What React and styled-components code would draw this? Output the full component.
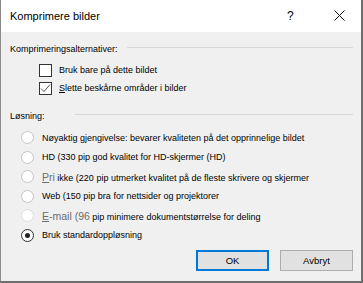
import styled, { createGlobalStyle } from "styled-components";

const Global = createGlobalStyle`
    html, body {
        margin: 0;
        padding: 0;
        background: #ffffff;
    }
    * {
        box-sizing: border-box;
    }
`

export default function App() {
    return (
        <Window>
            <Global />
            <TitleBar>
                <Title>Komprimere bilder</Title>
                <Help>?</Help>
                <Close>
                    <svg width="11" height="11" viewBox="0 0 11 11">
                        <path d="M0.5 0.5 L10.5 10.5 M10.5 0.5 L0.5 10.5" stroke="#111" strokeWidth="1" />
                    </svg>
                </Close>
            </TitleBar>

            <Body>
                <GroupHeader>
                    <span>Komprimeringsalternativer:</span>
                    <Rule gap={9} />
                </GroupHeader>
                <CheckList>
                    <CheckRow>
                        <CheckBox />
                        <span>Bruk bare på dette bildet</span>
                    </CheckRow>
                    <CheckRow>
                        <CheckBox>
                            <svg width="11" height="11" viewBox="0 0 11 11">
                                <path d="M1 5.5 L4 8.5 L10 1.5" fill="none" stroke="#555" strokeWidth="1" />
                            </svg>
                        </CheckBox>
                        <span><u>S</u>lette beskårne områder i bilder</span>
                    </CheckRow>
                </CheckList>

                <GroupHeader second>
                    <span>Løsning:</span>
                    <Rule gap={30} />
                </GroupHeader>
                <RadioList>
                    <RadioRow>
                        <Radio />
                        <span>Nøyaktig gjengivelse: bevarer kvaliteten på det opprinnelige bildet</span>
                    </RadioRow>
                    <RadioRow>
                        <Radio />
                        <span>HD (330 pip god kvalitet for HD-skjermer (HD)</span>
                    </RadioRow>
                    <RadioRow>
                        <Radio />
                        <span><Faded><u>P</u>ri</Faded> ikke (220 pip utmerket kvalitet på de fleste skrivere og skjermer</span>
                    </RadioRow>
                    <RadioRow>
                        <Radio />
                        <span>Web (150 pip bra for nettsider og projektorer</span>
                    </RadioRow>
                    <RadioRow>
                        <Radio disabled />
                        <span><Faded><u>E</u>-mail (96</Faded> pip minimere dokumentstørrelse for deling</span>
                    </RadioRow>
                    <RadioRow>
                        <Radio checked />
                        <span>Bruk standardoppløsning</span>
                    </RadioRow>
                </RadioList>

                <Footer>
                    <Button primary>OK</Button>
                    <Button>Avbryt</Button>
                </Footer>
            </Body>
        </Window>
    )
}

const Window = styled.div`
    width: 363px;
    height: 283px;
    display: flex;
    flex-direction: column;
    background-color: #f0f0f0;
    border-left: 1px solid #8a8a8a;
    border-right: 2px solid #6f6f6f;
    border-bottom: 2px solid #6f6f6f;
    font-family: "Liberation Sans", Arial, sans-serif;
    color: #000;
`

const TitleBar = styled.div`
    height: 32px;
    background-color: #ffffff;
    display: flex;
    align-items: center;
    padding-left: 9px;
    padding-bottom: 1px;
`

const Title = styled.div`
    font-size: 11px;
    flex: 1;
`

const Help = styled.div`
    font-size: 12px;
    width: 10px;
    margin-right: 37px;
`

const Close = styled.div`
    width: 11px;
    height: 11px;
    margin-right: 16px;
    display: flex;
`

const Body = styled.div`
    flex: 1;
    display: flex;
    flex-direction: column;
    padding: 11px 8px 10px 9px;
    font-size: 9px;
`

const GroupHeader = styled.div`
    display: flex;
    align-items: center;
    height: 12px;
    margin-top: ${p => p.second ? "13px" : "0"};
`

const Rule = styled.div`
    flex: 1;
    height: 1px;
    background-color: #d7d7d7;
    margin-left: ${p => p.gap}px;
    margin-top: -3px;
`

const CheckList = styled.div`
    display: flex;
    flex-direction: column;
    padding-left: 29px;
    margin-top: 6px;
`

const CheckRow = styled.div`
    display: flex;
    align-items: center;
    gap: 7px;
    height: 18px;
`

const CheckBox = styled.div`
    width: 13px;
    height: 13px;
    border: 1px solid #333;
    background-color: #fff;
    display: flex;
    align-items: center;
    justify-content: center;
`

const RadioList = styled.div`
    display: flex;
    flex-direction: column;
    padding-left: 11px;
    margin-top: 6px;
`

const RadioRow = styled.div`
    display: flex;
    align-items: center;
    gap: 8px;
    height: 19.5px;
    white-space: nowrap;
`

const Radio = styled.div`
    width: 13px;
    height: 13px;
    flex-shrink: 0;
    border-radius: 50%;
    border: 1px solid ${p => p.checked ? "#333" : p.disabled ? "#dcdcdc" : "#c4c4c4"};
    background-color: #fff;
    position: relative;

    &::after {
        content: "";
        display: ${p => p.checked ? "block" : "none"};
        position: absolute;
        left: 3px;
        top: 3px;
        width: 5px;
        height: 5px;
        border-radius: 50%;
        background-color: #222;
    }
`

const Faded = styled.span`
    font-size: 10.5px;
    color: #6d6d6d;
`

const Footer = styled.div`
    margin-top: auto;
    display: flex;
    justify-content: flex-end;
    gap: 11px;
`

const Button = styled.div`
    width: 73px;
    height: 21px;
    display: flex;
    align-items: center;
    justify-content: center;
    background-color: #e1e1e1;
    border: ${p => p.primary ? "2px solid #0078d7" : "1px solid #adadad"};
    font-size: 9.5px;
`
